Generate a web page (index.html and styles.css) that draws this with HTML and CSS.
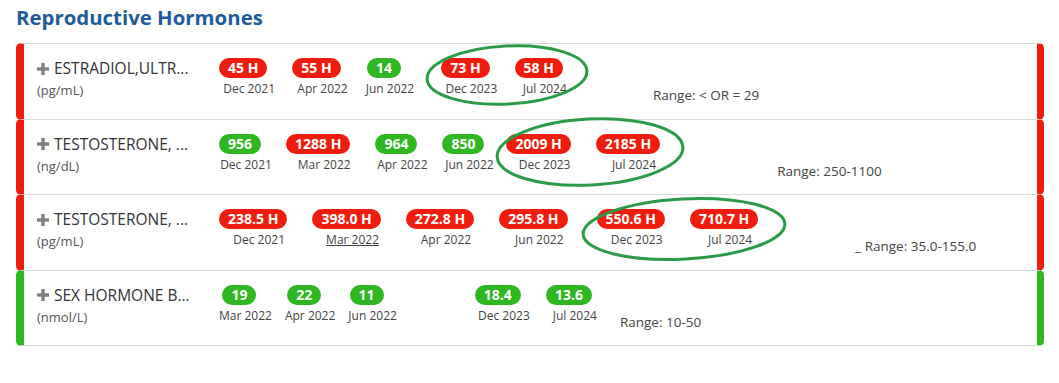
FILE: index.html
```html
<!DOCTYPE html>
<html lang="en">
<head>
<meta charset="utf-8">
<title>Reproductive Hormones</title>
<link rel="stylesheet" href="styles.css">
</head>
<body>
<main class="page">
  <h2 class="section-title">Reproductive Hormones</h2>
  <div class="results">

    <div class="result result--high">
      <div class="result__label">
        <div class="result__name"><svg class="plus" viewBox="0 0 12 12"><rect x="4.3" y="0" width="3.4" height="12"/><rect x="0" y="4.3" width="12" height="3.4"/></svg><span title="ESTRADIOL,ULTRASENSITIVE, LC/MS">ESTRADIOL,ULTR...</span></div>
        <div class="result__unit">(pg/mL)</div>
      </div>
      <div class="result__values">
        <div class="reading"><span class="pill pill--high">45 H</span><span class="reading__date">Dec 2021</span></div>
        <div class="reading"><span class="pill pill--high">55 H</span><span class="reading__date">Apr 2022</span></div>
        <div class="reading"><span class="pill pill--normal">14</span><span class="reading__date">Jun 2022</span></div>
        <div class="reading reading--spaced"><span class="pill pill--high">73 H</span><span class="reading__date">Dec 2023</span></div>
        <div class="reading"><span class="pill pill--high">58 H</span><span class="reading__date">Jul 2024</span></div>
      </div>
      <div class="result__range result__range--estradiol">Range: &lt; OR = 29</div>
    </div>

    <div class="result result--high">
      <div class="result__label">
        <div class="result__name"><svg class="plus" viewBox="0 0 12 12"><rect x="4.3" y="0" width="3.4" height="12"/><rect x="0" y="4.3" width="12" height="3.4"/></svg><span title="TESTOSTERONE, TOTAL, MS">TESTOSTERONE, ...</span></div>
        <div class="result__unit">(ng/dL)</div>
      </div>
      <div class="result__values">
        <div class="reading"><span class="pill pill--normal">956</span><span class="reading__date">Dec 2021</span></div>
        <div class="reading"><span class="pill pill--high">1288 H</span><span class="reading__date">Mar 2022</span></div>
        <div class="reading"><span class="pill pill--normal">964</span><span class="reading__date">Apr 2022</span></div>
        <div class="reading"><span class="pill pill--normal">850</span><span class="reading__date">Jun 2022</span></div>
        <div class="reading reading--tight"><span class="pill pill--high">2009 H</span><span class="reading__date">Dec 2023</span></div>
        <div class="reading"><span class="pill pill--high">2185 H</span><span class="reading__date">Jul 2024</span></div>
      </div>
      <div class="result__range result__range--total">Range: 250-1100</div>
    </div>

    <div class="result result--high">
      <div class="result__label">
        <div class="result__name"><svg class="plus" viewBox="0 0 12 12"><rect x="4.3" y="0" width="3.4" height="12"/><rect x="0" y="4.3" width="12" height="3.4"/></svg><span title="TESTOSTERONE, FREE">TESTOSTERONE, ...</span></div>
        <div class="result__unit">(pg/mL)</div>
      </div>
      <div class="result__values">
        <div class="reading"><span class="pill pill--high">238.5 H</span><span class="reading__date">Dec 2021</span></div>
        <div class="reading"><span class="pill pill--high">398.0 H</span><span class="reading__date reading__date--link">Mar 2022</span></div>
        <div class="reading"><span class="pill pill--high">272.8 H</span><span class="reading__date">Apr 2022</span></div>
        <div class="reading"><span class="pill pill--high">295.8 H</span><span class="reading__date">Jun 2022</span></div>
        <div class="reading reading--wide"><span class="pill pill--high">550.6 H</span><span class="reading__date">Dec 2023</span></div>
        <div class="reading"><span class="pill pill--high">710.7 H</span><span class="reading__date">Jul 2024</span></div>
      </div>
      <div class="result__range result__range--free">_ Range: 35.0-155.0</div>
    </div>

    <div class="result result--normal">
      <div class="result__label">
        <div class="result__name"><svg class="plus" viewBox="0 0 12 12"><rect x="4.3" y="0" width="3.4" height="12"/><rect x="0" y="4.3" width="12" height="3.4"/></svg><span title="SEX HORMONE BINDING GLOBULIN">SEX HORMONE B...</span></div>
        <div class="result__unit">(nmol/L)</div>
      </div>
      <div class="result__values">
        <div class="reading"><span class="pill pill--normal">19</span><span class="reading__date">Mar 2022</span></div>
        <div class="reading"><span class="pill pill--normal">22</span><span class="reading__date">Apr 2022</span></div>
        <div class="reading"><span class="pill pill--normal">11</span><span class="reading__date">Jun 2022</span></div>
        <div class="reading reading--gap"><span class="pill pill--normal">18.4</span><span class="reading__date">Dec 2023</span></div>
        <div class="reading"><span class="pill pill--normal">13.6</span><span class="reading__date">Jul 2024</span></div>
      </div>
      <div class="result__range result__range--shbg">Range: 10-50</div>
    </div>

  </div>

  <svg class="annotations" viewBox="0 0 1059 383" aria-hidden="true">
    <ellipse cx="507" cy="75" rx="80" ry="29" transform="rotate(-3 507 75)"/>
    <ellipse cx="590" cy="152" rx="93" ry="33" transform="rotate(-3 590 152)"/>
    <ellipse cx="684" cy="229" rx="101" ry="30" transform="rotate(-3 684 229)"/>
  </svg>
</main>
</body>
</html>
```

FILE: styles.css
```css
* { box-sizing: border-box; }

html, body {
  margin: 0;
  padding: 0;
  background: #ffffff;
}

body {
  font-family: "Open Sans", "Liberation Sans", sans-serif;
  color: #333333;
}

.page {
  position: relative;
  width: 1059px;
  height: 383px;
  padding: 5px 15px 0 16px;
  overflow: hidden;
}

.section-title {
  margin: 0 0 14px;
  font-size: 20.4px;
  line-height: 24px;
  font-weight: 700;
  color: #1d5c98;
}

.results {
  display: flex;
  flex-direction: column;
}

.result {
  display: flex;
  align-items: flex-start;
  height: 76.5px;
  padding: 14px 0 0 13px;
  border-top: 1px solid #dadada;
  border-bottom: 1px solid #dadada;
  border-left: 8px solid;
  border-right: 7px solid;
  border-radius: 5px;
  background: #ffffff;
}

.result + .result { margin-top: -1px; }

.result--high { border-left-color: #f01d0e; border-right-color: #f01d0e; }
.result--normal { border-left-color: #2db81f; border-right-color: #2db81f; }

.result__label {
  width: 182px;
  flex: none;
}

.result__name {
  display: flex;
  align-items: center;
  font-size: 15.5px;
  line-height: 21px;
  color: #333333;
  white-space: nowrap;
}

.plus {
  width: 12px;
  height: 12px;
  margin-right: 5px;
  fill: #808080;
  flex: none;
}

.result__unit {
  margin-top: 2px;
  font-size: 13px;
  line-height: 18px;
  color: #555555;
}

.result__values {
  display: flex;
  align-items: flex-start;
  gap: 13px;
}

.reading {
  display: flex;
  flex-direction: column;
  align-items: center;
}

.reading--spaced { margin-left: 14px; }
.reading--tight { margin-left: -3px; }
.reading--wide { margin-left: 4px; }
.reading--gap { margin-left: 65px; }

.pill {
  display: block;
  height: 20px;
  margin-right: 12px;
  padding: 0 9px;
  border-radius: 10px;
  font-size: 14px;
  line-height: 20px;
  font-weight: 700;
  color: #ffffff;
  white-space: nowrap;
}

.pill--high { background: #f01d0e; }
.pill--normal { background: #2db81f; }

.reading__date {
  margin-top: 3px;
  font-size: 12px;
  line-height: 16px;
  color: #444444;
  white-space: nowrap;
}

.reading__date--link { text-decoration: underline; }

.result__range {
  margin-top: 28px;
  font-size: 13.5px;
  line-height: 18px;
  color: #444444;
  white-space: nowrap;
}

.result__range--estradiol { margin-left: 78px; }
.result__range--total { margin-left: 105px; }
.result__range--free { margin-left: 85px; }
.result__range--shbg { margin-left: 16px; }

.annotations {
  position: absolute;
  left: 0;
  top: 0;
  width: 1059px;
  height: 383px;
  pointer-events: none;
  fill: none;
  stroke: #2a9c48;
  stroke-width: 3;
}
```
